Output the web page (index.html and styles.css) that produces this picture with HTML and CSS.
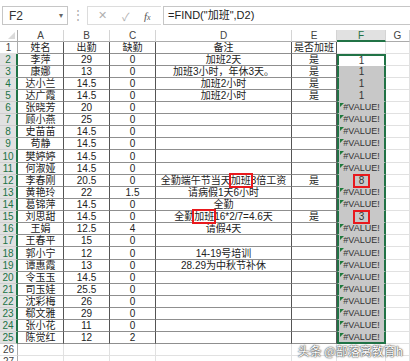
FILE: index.html
```html
<!DOCTYPE html>
<html lang="zh-CN">
<head>
    <meta charset="UTF-8">
    <title>FIND 加班</title>
    <link rel="stylesheet" href="styles.css">
</head>
<body>
    <!-- Formula bar -->
    <div class="formula-bar">
        <div class="name-box"><span>F2</span><span class="caret">&#9662;</span></div>
        <div class="grip">&#8942;</div>
        <div class="fx-buttons">
            <span class="fx-btn">&#10005;</span>
            <span class="fx-btn">&#10003;</span>
            <span class="fx-btn fx">f<small>x</small></span>
        </div>
        <div class="formula-input">=FIND("加班",D2)</div>
    </div>

    <!-- Sheet -->
    <div class="sheet-wrap">
        <div class="sheet" id="sheet">
            <div class="cell corner"></div>
            <div class="cell col-head">A</div>
            <div class="cell col-head">B</div>
            <div class="cell col-head">C</div>
            <div class="cell col-head">D</div>
            <div class="cell col-head">E</div>
            <div class="cell col-head sel-col">F</div>
            <div class="cell col-head">G</div>
        </div>
        <div class="watermark">头条 @部落窝教育h</div>
    </div>

    <script>
        var data = [
            ['姓名', '出勤', '缺勤', '备注', '是否加班', ''],
            ['李萍', '29', '0', '加班2天', '是', '1'],
            ['康娜', '13', '0', '加班3小时，年休3天。', '是', '1'],
            ['达小兰', '14.5', '0', '加班2小时', '是', '1'],
            ['达广霞', '14.5', '0', '加班2小时', '是', '1'],
            ['张晓芳', '20', '0', '', '', '#VALUE!'],
            ['顾小燕', '25', '0', '', '', '#VALUE!'],
            ['史苗苗', '14.5', '0', '', '', '#VALUE!'],
            ['苟静', '14.5', '0', '', '', '#VALUE!'],
            ['樊婷婷', '14.5', '0', '', '', '#VALUE!'],
            ['何淑娅', '14.5', '0', '', '', '#VALUE!'],
            ['李春刚', '20.5', '0', '全勤端午节当天<span class="hit">加班</span>3倍工资', '是', '<span class="hit num">8</span>'],
            ['黄艳玲', '22', '1.5', '请病假1天6小时', '', '#VALUE!'],
            ['葛锦萍', '14.5', '0', '全勤', '', '#VALUE!'],
            ['刘思甜', '14.5', '0', '全勤<span class="hit">加班</span>16*2/7=4.6天', '是', '<span class="hit num">3</span>'],
            ['王娟', '12.5', '4', '请假4天', '', '#VALUE!'],
            ['王春平', '15', '0', '', '', '#VALUE!'],
            ['郭小宁', '12', '0', '14-19号培训', '', '#VALUE!'],
            ['谭惠霞', '13', '0', '28.29为中秋节补休', '', '#VALUE!'],
            ['令玉玉', '14.5', '0', '', '', '#VALUE!'],
            ['司玉娃', '25.5', '0', '', '', '#VALUE!'],
            ['沈彩梅', '26', '0', '', '', '#VALUE!'],
            ['郗文雅', '29', '0', '', '', '#VALUE!'],
            ['张小花', '11', '0', '', '', '#VALUE!'],
            ['陈觉红', '12', '2', '', '', '#VALUE!']
        ];

        var sheet = document.getElementById('sheet');
        var html = '';
        for (var i = 0; i < 27; i++) {
            var n = i + 1;
            var row = data[i];
            html += '<div class="cell row-head' + (n >= 2 && n <= 25 ? ' sel-row' : '') + '">' + n + '</div>';
            if (row) {
                for (var j = 0; j < 5; j++) {
                    html += '<div class="cell boxed">' + row[j] + '</div>';
                }
                // F2:F25 is the selected range, F2 the active cell
                var fcls = 'cell f-cell';
                if (n >= 2) fcls += ' sel';
                if (n === 2) fcls += ' active';
                if (n === 25) fcls += ' sel-last';
                if (row[5] === '#VALUE!') fcls += ' err';
                html += '<div class="' + fcls + '">' + row[5] + '</div>';
            } else {
                html += '<div class="cell"></div><div class="cell"></div><div class="cell"></div>'
                      + '<div class="cell"></div><div class="cell"></div><div class="cell"></div>';
            }
            html += '<div class="cell"></div>';
        }
        sheet.insertAdjacentHTML('beforeend', html);
    </script>
</body>
</html>
```

FILE: styles.css
```css
body {
    margin: 0;
    width: 410px;
    height: 361px;
    overflow: hidden;
    background-color: #ffffff;
    color: #222;
    font-family: "Liberation Sans", "Noto Sans CJK SC", sans-serif;
    font-size: 10px;
}

/* formula bar */
.formula-bar {
    height: 30px;
    box-sizing: border-box;
    padding-top: 6px;
    display: flex;
    align-items: flex-start;
    background-color: #ffffff;
}
.name-box {
    margin-left: 2px;
    width: 66px;
    height: 19px;
    box-sizing: border-box;
    border: 1px solid #c6c6c6;
    padding: 0 4px 0 6px;
    display: flex;
    align-items: center;
    justify-content: space-between;
    font-size: 12px;
    color: #333;
}
.caret {
    font-size: 8px;
    color: #666;
}
.grip {
    width: 19px;
    text-align: center;
    line-height: 19px;
    font-size: 12px;
    color: #aaa;
}
.fx-buttons {
    width: 74px;
    height: 19px;
    box-sizing: border-box;
    border: 1px solid #dcdcdc;
    border-right: none;
    display: flex;
    align-items: center;
    justify-content: space-around;
    padding: 0 3px;
}
.fx-btn {
    font-size: 11px;
    color: #b0b0b0;
}
.fx-btn.fx {
    font-family: "Liberation Serif", serif;
    font-style: italic;
    color: #555;
}
.fx-btn.fx small {
    font-size: 8px;
}
.formula-input {
    flex: 1;
    height: 19px;
    box-sizing: border-box;
    border: 1px solid #c6c6c6;
    border-right: none;
    margin-left: 2px;
    padding-left: 4px;
    line-height: 17px;
    font-size: 11px;
    color: #222;
}

/* sheet grid */
.sheet-wrap {
    position: relative;
}
.sheet {
    display: grid;
    grid-template-columns: 18px 46px 46px 46px 136px 45px 49px 24px;
    /* header, rows 1-9, row 10, rows 11-17, row 18, rows 19-27 */
    grid-template-rows: 12px repeat(9, 12px) 13px repeat(7, 12px) 13px repeat(9, 12px);
}
.cell {
    box-sizing: border-box;
    min-width: 0;
    display: flex;
    align-items: center;
    justify-content: center;
    white-space: nowrap;
    line-height: 11px;
    border-right: 1px solid #e1e1e1;
    border-bottom: 1px solid #e1e1e1;
}

.col-head {
    color: #444;
    border-right-color: #d4d4d4;
    border-bottom-color: #ababab;
}
.col-head.sel-col {
    background-color: #e1e1e1;
    color: #217346;
    border-bottom: 2px solid #217346;
}
.corner {
    position: relative;
    border-bottom-color: #ababab;
    border-right-color: #ababab;
}
.corner::after {
    content: "";
    position: absolute;
    right: 2px;
    bottom: 2px;
    border-left: 7px solid transparent;
    border-bottom: 7px solid #dadada;
}

.row-head {
    color: #444;
    border-right-color: #ababab;
}
.row-head.sel-row {
    background-color: #e1e1e1;
    color: #217346;
    border-right: 2px solid #217346;
    border-bottom-color: #cfcfcf;
}

/* bordered data block A1:E25 */
.boxed {
    border-right-color: #555;
    border-bottom-color: #8f8f8f;
}

/* selection F2:F25 */
.f-cell {
    position: relative;
    color: #333;
}
.f-cell.sel {
    background-color: #c8c8c8;
    border-left: 2px solid #217346;
    border-right: 2px solid #217346;
    border-bottom-color: #c8c8c8;
}
.f-cell.active {
    background-color: #ffffff;
    border-top: 2px solid #217346;
    border-bottom-color: #ffffff;
}
.f-cell.sel-last {
    border-bottom: 2px solid #217346;
}
.err {
    font-size: 9px;
}
.err::before {
    content: "";
    position: absolute;
    left: 1px;
    top: 1px;
    border-top: 4px solid #1e7a3c;
    border-right: 4px solid transparent;
}

/* red marks */
.hit {
    position: relative;
    z-index: 1;
    display: inline-block;
    line-height: 11px;
    outline: 2px solid #e8191d;
    outline-offset: 0;
}
.hit.num {
    box-sizing: border-box;
    width: 17px;
    height: 14px;
    line-height: 10px;
    text-align: center;
    outline: none;
    border: 2px solid #e8191d;
}

.watermark {
    position: absolute;
    right: 7px;
    bottom: 9px;
    font-family: "Noto Sans CJK SC", sans-serif;
    font-size: 12px;
    color: #ffffff;
    text-shadow: 0 0 2px #333, 0 0 1px #222;
}
```
